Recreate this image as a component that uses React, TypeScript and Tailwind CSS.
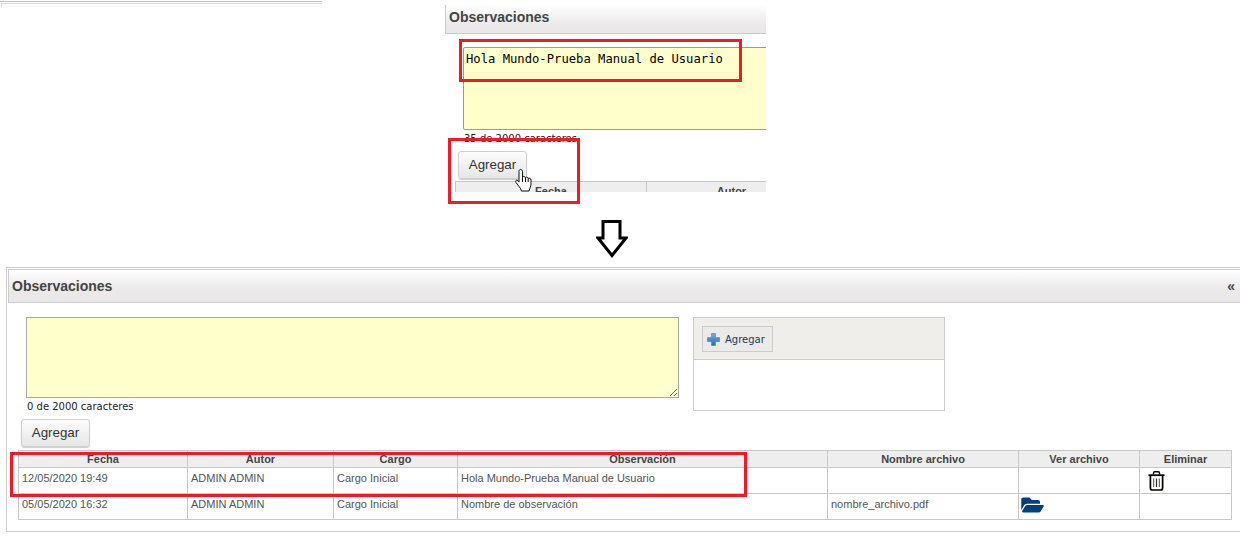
import React from "react";
import { FaFolderOpen } from "react-icons/fa";

const sans = "font-['Liberation_Sans',Arial,sans-serif]";
const verdana = "font-['DejaVu_Sans',Verdana,sans-serif]";

function Hand() {
  return (
    <svg viewBox="0 0 17 23" className="absolute left-[515px] top-[169px] w-[17px] h-[23px]">
      <path
        d="M5.5 .5C6.7 .5 7.5 1.2 7.5 2.4V8.2C8.2 7.2 10 7.2 10.5 8.7C11.2 7.8 12.8 8 13.2 9.4C14 8.8 16 9.2 16 11V16L14 22H6.5L5.5 19.5L1 13.5C0 11.8 1.4 10.4 3 11.6L4 13V2.4C4 1.2 4.5 .5 5.5 .5Z"
        fill="#fff"
        stroke="#111"
        strokeWidth="1"
        strokeLinejoin="round"
      />
      <path d="M7.5 8.2V13M10.5 8.7V13M13.2 9.4V13" fill="none" stroke="#111" strokeWidth="1" />
    </svg>
  );
}

function Trash() {
  return (
    <svg viewBox="0 0 17 20" className="w-[17px] h-[20px] block ml-[5px]">
      <path d="M5.5 3.5V2A1.2 1.2 0 0 1 6.7 .8H10.3A1.2 1.2 0 0 1 11.5 2V3.5" fill="none" stroke="#000" strokeWidth="1.4" />
      <path d="M.5 4.2H16.5" stroke="#000" strokeWidth="1.8" />
      <path d="M2.4 5V17A2 2 0 0 0 4.4 19H12.6A2 2 0 0 0 14.6 17V5" fill="none" stroke="#000" strokeWidth="1.7" />
      <path d="M5.6 7.5V16" stroke="#8a6a20" strokeWidth="1.2" />
      <path d="M8.5 7.5V16" stroke="#1c2f52" strokeWidth="1.2" />
      <path d="M11.4 7.5V16" stroke="#8a6a20" strokeWidth="1.2" />
    </svg>
  );
}

function Plus() {
  return (
    <svg viewBox="0 0 13 13" className="w-[13px] h-[13px] block">
      <defs>
        <linearGradient id="plusGrad" x1="0" y1="0" x2="0" y2="1">
          <stop offset="0" stopColor="#74aedb" />
          <stop offset="1" stopColor="#1f6fb0" />
        </linearGradient>
      </defs>
      <path d="M4.5 .5H8.5V4.5H12.5V8.5H8.5V12.5H4.5V8.5H.5V4.5H4.5Z" fill="url(#plusGrad)" stroke="#3f83b8" strokeWidth=".6" />
    </svg>
  );
}

function Button({ className = "" }: { className?: string }) {
  return (
    <button
      className={`w-[69px] h-[28px] rounded-[3px] border border-[#cfcfcf] bg-gradient-to-b from-[#fdfdfd] to-[#e6e6e6] shadow-[0_1px_1px_rgba(0,0,0,0.2)] text-[13.33px] text-[#333] ${sans} ${className}`}
    >
      Agregar
    </button>
  );
}

const headers = ["Fecha", "Autor", "Cargo", "Observación", "Nombre archivo", "Ver archivo", "Eliminar"];
const widths = ["w-[169px]", "w-[146px]", "w-[124px]", "w-[370px]", "w-[191px]", "w-[121px]", "w-[92px]"];

function Cell({ children }: { children?: React.ReactNode }) {
  return <td className="border border-[#c8c8c8] align-top h-[26px] pl-[3px] pt-[3px] leading-[14px]">{children}</td>;
}

function ObsTable() {
  return (
    <table className={`table-fixed border-collapse w-[1213px] text-[11px] text-[#555] ${sans}`}>
      <colgroup>
        {widths.map((w) => (
          <col key={w} className={w} />
        ))}
      </colgroup>
      <thead>
        <tr>
          {headers.map((h) => (
            <th key={h} className="border border-[#c8c8c8] bg-[#eeeeee] h-[17px] p-0 leading-[14px] font-bold text-[#444] text-center">
              {h}
            </th>
          ))}
        </tr>
      </thead>
      <tbody>
        <tr>
          <Cell>12/05/2020 19:49</Cell>
          <Cell>ADMIN ADMIN</Cell>
          <Cell>Cargo Inicial</Cell>
          <Cell>Hola Mundo-Prueba Manual de Usuario</Cell>
          <Cell />
          <Cell />
          <Cell>
            <Trash />
          </Cell>
        </tr>
        <tr>
          <Cell>05/05/2020 16:32</Cell>
          <Cell>ADMIN ADMIN</Cell>
          <Cell>Cargo Inicial</Cell>
          <Cell>Nombre de observación</Cell>
          <Cell>nombre_archivo.pdf</Cell>
          <Cell>
            <FaFolderOpen className="text-[#004080] w-[23px] h-[20px] -mt-[2px] -ml-[1px]" />
          </Cell>
          <Cell />
        </tr>
      </tbody>
    </table>
  );
}

export default function App() {
  return (
    <div className="relative w-[1240px] h-[542px] overflow-hidden bg-white">
      <div className="flex items-start h-[192px]">
        <div className="w-[322px] pt-[1px]">
          <div className="h-[1px] bg-[#c4c4c4]" />
          <div className="mt-[1px] ml-[1px] h-[4px] border-l border-t border-[#dcdcdc] bg-[#fbfbfb]" />
        </div>
        <div className="ml-[123px] w-[321px] h-[192px] pt-[5px] overflow-hidden">
          <div className="h-[29px] border-l border-b border-[#cccccc] bg-gradient-to-b from-white via-[#ebe9e9] via-70% to-[#e9e7e7] flex items-center pl-[3px] pb-[4px]">
            <span className={`text-[14px] font-bold text-[#444] ${sans}`}>Observaciones</span>
          </div>
          <div className="pl-[18px] pt-[13px]">
            <textarea
              readOnly
              defaultValue="Hola Mundo-Prueba Manual de Usuario"
              className="block w-[400px] h-[83px] resize-none rounded-[2px] border border-[#7c9fd8] bg-[#ffffcc] px-[2px] py-[4px] font-['DejaVu_Sans_Mono',monospace] text-[12.2px] leading-[14px] text-black outline-none"
            />
            <p className={`h-[21px] pl-[1px] text-[10px] leading-[18px] text-[#222] ${verdana}`}>35 de 2000 caracteres</p>
            <Button className="block -ml-[5px]" />
          </div>
          <div className={`mt-[2px] ml-[10px] w-[500px] flex border-t border-l border-[#c8c8c8] bg-[#eeeeee] text-[11px] font-bold text-[#444] leading-[14px] ${sans}`}>
            <div className="w-[191px] text-center border-r border-[#c8c8c8] pt-[2px] h-[20px]">Fecha</div>
            <div className="w-[169px] text-center pt-[2px]">Autor</div>
          </div>
        </div>
      </div>

      <div className="h-[75px] flex justify-start pl-[596px] pt-[28px]">
        <svg viewBox="0 0 32 38" className="w-[32px] h-[38px] block">
          <path d="M7 1.5H24V18H30L16 35.5L2 18H7Z" fill="#fff" stroke="#000" strokeWidth="3" />
        </svg>
      </div>

      <div className="ml-[6px] w-[1240px] border border-[#cccccc] p-[1px] pb-[11px]">
        <div className="h-[34px] border border-[#cccccc] bg-gradient-to-b from-white via-[#ebe9e9] via-60% to-[#e9e7e7] flex items-center justify-between pl-[3px] pr-[8px]">
          <span className={`text-[14px] font-bold text-[#444] ${sans}`}>Observaciones</span>
          <span className={`text-[14px] font-bold text-[#3c4c5c] ${sans}`}>«</span>
        </div>
        <div className="flex pl-[18px] pt-[14px]">
          <div>
            <textarea
              readOnly
              defaultValue=""
              className="block w-[653px] h-[81px] border border-[#a8a8a8] bg-[#ffffcc] outline-none"
            />
            <p className={`h-[21px] pl-[1px] text-[10px] leading-[18px] text-[#222] ${verdana}`}>0 de 2000 caracteres</p>
            <Button className="block -ml-[5px]" />
          </div>
          <div className="ml-[14px] w-[252px] h-[94px] border border-[#cccccc]">
            <div className="h-[42px] border-b border-[#cccccc] bg-[#f0eeeb] pl-[8px] pt-[8px]">
              <button className={`flex items-center w-[71px] h-[26px] border border-[#cccccc] bg-[#ebe9e9] pl-[4px] text-[10px] text-[#1c3a5c] ${verdana}`}>
                <Plus />
                <span className="ml-[5px]">Agregar</span>
              </button>
            </div>
          </div>
        </div>
        <div className="ml-[10px] mt-[3px]">
          <ObsTable />
        </div>
      </div>

      <Hand />

      <div className="absolute left-[459px] top-[39px] w-[283px] h-[43px] border-[3px] border-[#ed1c24]" />
      <div className="absolute left-[448px] top-[138px] w-[132px] h-[66px] border-[3px] border-[#ed1c24]" />
      <div className="absolute left-[10px] top-[452px] w-[737px] h-[45px] border-[3px] border-[#ed1c24]" />
    </div>
  );
}
